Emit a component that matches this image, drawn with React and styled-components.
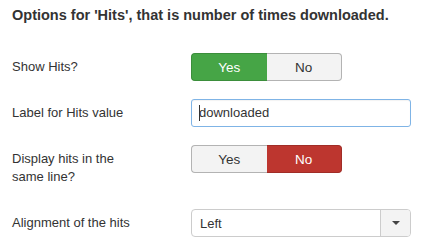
import React, { useState } from 'react';
import styled, { createGlobalStyle } from 'styled-components';

const GlobalStyle = createGlobalStyle`
  body {
    margin: 0;
    background: #fff;
    font-family: "Liberation Sans", Arial, sans-serif;
    font-size: 13px;
    color: #333;
  }
`;

const Page = styled.div`
  padding: 6px 12px;
`;

const Title = styled.h4`
  margin: 0 0 29px;
  font-size: 14.5px;
  line-height: 18px;
  font-weight: bold;
  color: #333;
`;

const Row = styled.div`
  display: grid;
  grid-template-columns: 179px 220px;
  align-items: start;
  margin-bottom: 18px;
`;

const Label = styled.label`
  padding: 5px 54px 5px 0;
  line-height: 18px;
`;

const Toggle = styled.div`
  display: flex;
  width: 151px;
`;

const ToggleButton = styled.button`
  flex: 1;
  height: 28px;
  padding: 0;
  font-family: inherit;
  font-size: 13.5px;
  cursor: pointer;
  border: 1px solid ${({ $on, $tone }) => ($on ? ($tone === 'green' ? '#3b8e3b' : '#a02d27') : '#b3b3b3')};
  background: ${({ $on, $tone }) => ($on ? ($tone === 'green' ? '#46a546' : '#bd362f') : '#f3f3f3')};
  color: ${({ $on }) => ($on ? '#fff' : '#333')};
  border-radius: ${({ $first }) => ($first ? '4px 0 0 4px' : '0 4px 4px 0')};
  ${({ $first }) => ($first ? 'border-right: none;' : 'border-left: none;')}
`;

const TextBox = styled.div`
  box-sizing: border-box;
  height: 28px;
  width: 220px;
  border: 1px solid #7fb4e6;
  border-radius: 3px;
  padding: 0 7px;
  display: flex;
  align-items: center;
  line-height: 18px;
  box-shadow: inset 0 1px 1px rgba(0, 0, 0, 0.05);
`;

const Caret = styled.span`
  display: inline-block;
  width: 1px;
  height: 16px;
  background: #333;
  margin-right: -1px;
`;

const Select = styled.div`
  box-sizing: border-box;
  height: 28px;
  width: 220px;
  border: 1px solid #ccc;
  border-radius: 4px;
  display: flex;
  overflow: hidden;
`;

const SelectValue = styled.div`
  flex: 1;
  padding: 0 8px;
  display: flex;
  align-items: center;
`;

const SelectArrow = styled.div`
  width: 29px;
  border-left: 1px solid #ccc;
  background: #f3f3f3;
  display: flex;
  align-items: center;
  justify-content: center;

  &::after {
    content: '';
    border-left: 4px solid transparent;
    border-right: 4px solid transparent;
    border-top: 4px solid #444;
  }
`;

const YesNo = ({ value, onChange, yesTone, noTone }) => (
  <Toggle>
    <ToggleButton $first $on={value} $tone={yesTone} onClick={() => onChange(true)}>Yes</ToggleButton>
    <ToggleButton $on={!value} $tone={noTone} onClick={() => onChange(false)}>No</ToggleButton>
  </Toggle>
);

const App = () => {
  const [showHits, setShowHits] = useState(true);
  const [sameLine, setSameLine] = useState(false);

  return (
    <Page>
      <GlobalStyle />
      <Title>Options for 'Hits', that is number of times downloaded.</Title>

      <Row>
        <Label>Show Hits?</Label>
        <YesNo value={showHits} onChange={setShowHits} yesTone="green" noTone="red" />
      </Row>

      <Row>
        <Label>Label for Hits value</Label>
        <TextBox>
          <Caret />
          downloaded
        </TextBox>
      </Row>

      <Row>
        <Label>Display hits in the same line?</Label>
        <YesNo value={sameLine} onChange={setSameLine} yesTone="green" noTone="red" />
      </Row>

      <Row>
        <Label>Alignment of the hits</Label>
        <Select>
          <SelectValue>Left</SelectValue>
          <SelectArrow />
        </Select>
      </Row>
    </Page>
  );
};

export default App;
